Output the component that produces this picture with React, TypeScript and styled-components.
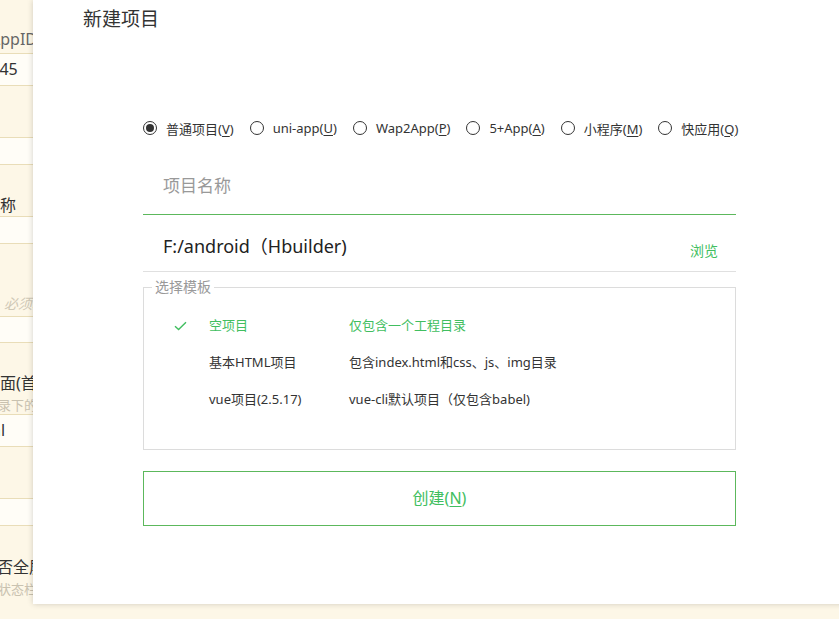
import { Fragment } from 'react';
import styled, { createGlobalStyle } from 'styled-components';

const GlobalStyle = createGlobalStyle`
  html, body {
    margin: 0;
    padding: 0;
    height: 100%;
    overflow: hidden;
  }
  body {
    background: #fdf7e7;
    font-family: "Noto Sans", "Noto Sans CJK SC", sans-serif;
  }
`;

const GREEN = '#41be60';
const GREEN_LINE = '#5cb85c';

const Page = styled.div`
  position: relative;
  width: 839px;
  height: 619px;
  overflow: hidden;
  background: #fdf7e7;
`;

/* form behind the dialog */
const BackForm = styled.div`
  display: flex;
  flex-direction: column;
  width: 200px;
`;

const BackRow = styled.div<{ h: number; pb?: number; light?: boolean }>`
  height: ${(p) => p.h}px;
  box-sizing: border-box;
  border-bottom: 1px solid #e9ddb8;
  background: ${(p) => (p.light ? '#fffdf7' : 'transparent')};
  display: flex;
  flex-direction: column;
  justify-content: flex-end;
  padding-bottom: ${(p) => p.pb ?? 6}px;
  white-space: nowrap;
  overflow: hidden;
`;

const BackText = styled.span<{ shift: number }>`
  display: block;
  margin-left: ${(p) => p.shift}px;
  font-size: 16px;
  line-height: 20px;
  color: #333;
`;

const BackLabel = styled(BackText)`
  color: #666;
`;

const BackHint = styled(BackText)`
  margin-top: 4px;
  font-size: 13px;
  line-height: 16px;
  color: #c9c2b0;
`;

const BackPlaceholder = styled(BackText)`
  font-size: 14px;
  font-style: italic;
  color: #cfc8b6;
`;

/* dialog */
const Dialog = styled.div`
  position: absolute;
  left: 33px;
  top: 0;
  width: 830px;
  height: 604px;
  background: #fff;
  box-shadow: 0 0 6px rgba(0, 0, 0, 0.18);
  display: flex;
  flex-direction: column;
`;

const Title = styled.div`
  margin: 7px 0 0 50px;
  font-size: 19px;
  line-height: 24px;
  color: #333;
`;

const Body = styled.div`
  margin: 87px 0 0 110px;
  width: 593px;
  display: flex;
  flex-direction: column;
`;

const RadioRow = styled.div`
  display: flex;
  align-items: center;
  height: 20px;
  gap: 16px;
`;

const RadioItem = styled.label`
  display: flex;
  align-items: center;
  gap: 9px;
  font-size: 13px;
  color: #333;
  white-space: nowrap;
`;

const RadioCircle = styled.span<{ checked?: boolean }>`
  width: 14px;
  height: 14px;
  box-sizing: border-box;
  border: 1.5px solid #333;
  border-radius: 50%;
  display: flex;
  align-items: center;
  justify-content: center;
  &::after {
    content: '';
    width: 8px;
    height: 8px;
    border-radius: 50%;
    background: ${(p) => (p.checked ? '#333' : 'transparent')};
  }
`;

const Key = styled.u`
  text-underline-offset: 2px;
`;

const NameField = styled.div`
  margin-top: 16px;
  height: 60px;
  border-bottom: 1px solid ${GREEN_LINE};
  display: flex;
  align-items: center;
  padding-left: 20px;
  font-size: 17px;
  color: #999;
`;

const LocationField = styled.div`
  height: 56px;
  border-bottom: 1px solid #e0e0e0;
  display: flex;
  align-items: center;
  justify-content: space-between;
  padding: 0 18px 0 20px;
`;

const LocationText = styled.span`
  font-size: 18px;
  color: #222;
  margin-top: 3px;
`;

const Browse = styled.span`
  font-size: 14px;
  color: ${GREEN};
  margin-top: 14px;
`;

const TemplateBox = styled.fieldset`
  margin: 7px 0 0;
  padding: 0 0 32px;
  border: 1px solid #dcdcdc;
  min-width: 0;
`;

const Legend = styled.legend`
  margin-left: 8px;
  padding: 0 3px;
  font-size: 14px;
  line-height: 16px;
  color: #999;
`;

const TemplateList = styled.div`
  margin-top: 11px;
  display: grid;
  grid-template-columns: 30px 35px 140px 1fr;
  grid-auto-rows: 37px;
  align-items: center;
`;

const Cell = styled.span<{ active?: boolean }>`
  font-size: 13px;
  color: ${(p) => (p.active ? GREEN : '#333')};
  white-space: nowrap;
`;

const CreateButton = styled.button`
  margin-top: 21px;
  height: 55px;
  padding: 0 0 4px;
  background: #fff;
  border: 1px solid ${GREEN_LINE};
  font-family: inherit;
  font-size: 16px;
  color: ${GREEN};
  cursor: pointer;
`;

const radios = [
  { label: '普通项目', key: 'V', checked: true },
  { label: 'uni-app', key: 'U' },
  { label: 'Wap2App', key: 'P' },
  { label: '5+App', key: 'A' },
  { label: '小程序', key: 'M' },
  { label: '快应用', key: 'Q' },
];

const templates = [
  { name: '空项目', desc: '仅包含一个工程目录', active: true },
  { name: '基本HTML项目', desc: '包含index.html和css、js、img目录' },
  { name: 'vue项目(2.5.17)', desc: 'vue-cli默认项目（仅包含babel)' },
];

function Check() {
  return (
    <svg width="13" height="10" viewBox="0 0 13 10">
      <path d="M1 5.2 L4.6 8.6 L12 1.2" fill="none" stroke={GREEN} strokeWidth="1.4" />
    </svg>
  );
}

export default function App() {
  return (
    <Page>
      <GlobalStyle />
      <BackForm>
        <BackRow h={54} pb={4}>
          <BackLabel shift={-10}>AppID</BackLabel>
        </BackRow>
        <BackRow h={32} light>
          <BackText shift={-28}>12345</BackText>
        </BackRow>
        <BackRow h={52} />
        <BackRow h={27} light />
        <BackRow h={52} pb={1}>
          <BackText shift={-48}>应用名称</BackText>
        </BackRow>
        <BackRow h={27} light />
        <BackRow h={73} pb={2}>
          <BackPlaceholder shift={4}>必须填写</BackPlaceholder>
        </BackRow>
        <BackRow h={26} light />
        <BackRow h={72} pb={1}>
          <BackText shift={-48}>启动界面(首页)</BackText>
          <BackHint shift={-41}>相对目录下的</BackHint>
        </BackRow>
        <BackRow h={32} light>
          <BackText shift={-75}>index.html</BackText>
        </BackRow>
        <BackRow h={52} />
        <BackRow h={27} light />
        <BackRow h={94} pb={22}>
          <BackText shift={-19}>是否全屏</BackText>
          <BackHint shift={-2}>状态栏</BackHint>
        </BackRow>
      </BackForm>

      <Dialog>
        <Title>新建项目</Title>
        <Body>
          <RadioRow>
            {radios.map((r) => (
              <RadioItem key={r.key}>
                <RadioCircle checked={r.checked} />
                <span>
                  {r.label}(<Key>{r.key}</Key>)
                </span>
              </RadioItem>
            ))}
          </RadioRow>
          <NameField>项目名称</NameField>
          <LocationField>
            <LocationText>F:/android（Hbuilder)</LocationText>
            <Browse>浏览</Browse>
          </LocationField>
          <TemplateBox>
            <Legend>选择模板</Legend>
            <TemplateList>
              {templates.map((t) => (
                <Fragment key={t.name}>
                  <span />
                  <span>{t.active ? <Check /> : null}</span>
                  <Cell active={t.active}>{t.name}</Cell>
                  <Cell active={t.active}>{t.desc}</Cell>
                </Fragment>
              ))}
            </TemplateList>
          </TemplateBox>
          <CreateButton>
            创建(<Key>N</Key>)
          </CreateButton>
        </Body>
      </Dialog>
    </Page>
  );
}
